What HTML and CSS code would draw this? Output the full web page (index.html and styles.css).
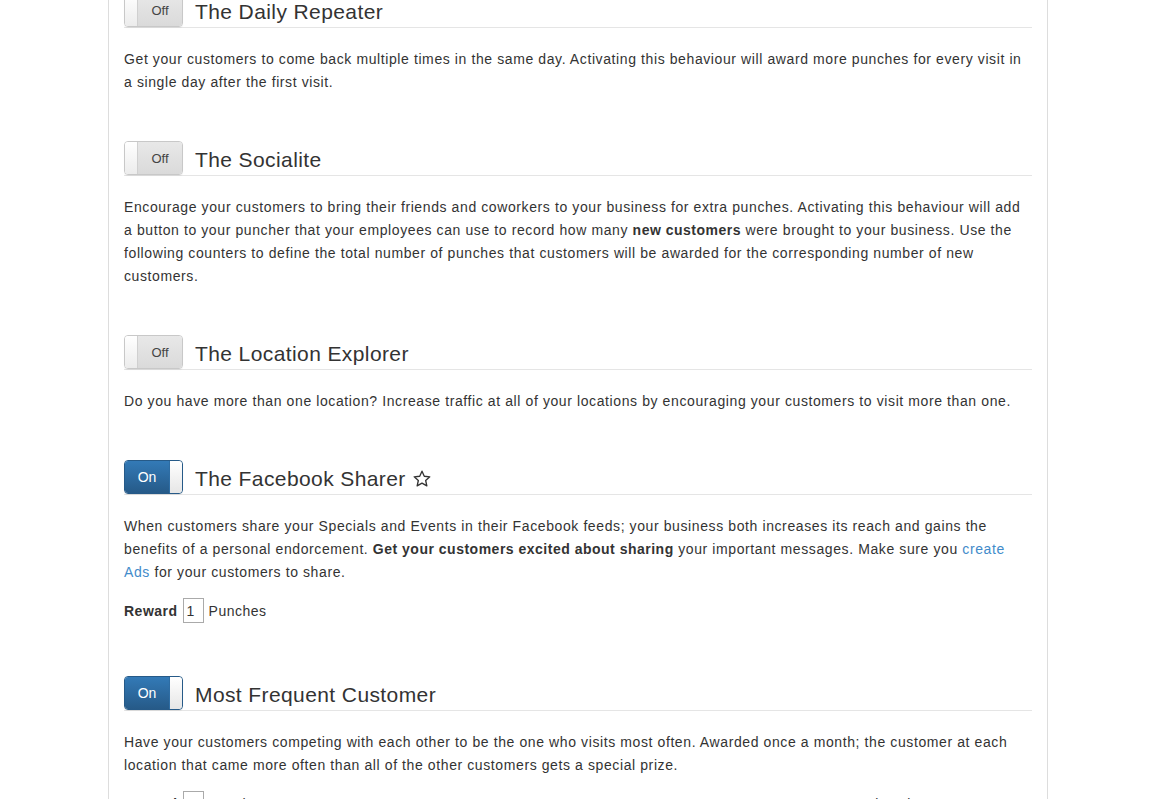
FILE: index.html
```html
<!DOCTYPE html>
<html>
<head>
<meta charset="utf-8">
<link rel="stylesheet" href="styles.css">
</head>
<body>
<div class="container">
  <div class="panel">
    <section class="behaviour first">
      <div class="bh-head">
        <span class="toggle off"><span class="handle"></span><span class="label">Off</span></span>
        <h4 class="bh-title">The Daily Repeater</h4>
      </div>
      <p class="bh-text">Get your customers to come back multiple times in the same day. Activating this behaviour will award more punches for every visit in a single day after the first visit.</p>
    </section>

    <section class="behaviour">
      <div class="bh-head">
        <span class="toggle off"><span class="handle"></span><span class="label">Off</span></span>
        <h4 class="bh-title">The Socialite</h4>
      </div>
      <p class="bh-text">Encourage your customers to bring their friends and coworkers to your business for extra punches. Activating this behaviour will add a button to your puncher that your employees can use to record how many <b>new customers</b> were brought to your business. Use the following counters to define the total number of punches that customers will be awarded for the corresponding number of new customers.</p>
    </section>

    <section class="behaviour">
      <div class="bh-head">
        <span class="toggle off"><span class="handle"></span><span class="label">Off</span></span>
        <h4 class="bh-title">The Location Explorer</h4>
      </div>
      <p class="bh-text">Do you have more than one location? Increase traffic at all of your locations by encouraging your customers to visit more than one.</p>
    </section>

    <section class="behaviour">
      <div class="bh-head">
        <span class="toggle on"><span class="label">On</span><span class="handle"></span></span>
        <h4 class="bh-title">The Facebook Sharer
          <svg class="star" viewBox="0 0 24 24" width="20" height="20"><path d="M12 2.6l2.75 6.1 6.6.65-4.95 4.45 1.42 6.5L12 16.95 6.18 20.3l1.42-6.5L2.65 9.35l6.6-.65z" fill="none" stroke="#333" stroke-width="1.6" stroke-linejoin="round"/></svg>
        </h4>
      </div>
      <p class="bh-text">When customers share your Specials and Events in their Facebook feeds; your business both increases its reach and gains the benefits of a personal endorcement. <b>Get your customers excited about sharing</b> your important messages. Make sure you <a href="#">create Ads</a> for your customers to share.</p>
      <div class="reward">
        <b class="reward-label">Reward</b>
        <input class="reward-input" type="text" value="1">
        <span class="reward-unit">Punches</span>
      </div>
    </section>

    <section class="behaviour">
      <div class="bh-head">
        <span class="toggle on"><span class="label">On</span><span class="handle"></span></span>
        <h4 class="bh-title">Most Frequent Customer</h4>
      </div>
      <p class="bh-text">Have your customers competing with each other to be the one who visits most often. Awarded once a month; the customer at each location that came more often than all of the other customers gets a special prize.</p>
      <div class="reward">
        <b class="reward-label">Reward</b>
        <input class="reward-input" type="text" value="">
        <span class="reward-unit">Punches</span>
        <span class="check-wrap"><span class="check"></span> Per location</span>
      </div>
    </section>
  </div>
</div>
</body>
</html>
```

FILE: styles.css
```css
html, body {
  margin: 0;
  padding: 0;
  background: #fff;
  overflow: hidden;
}
body {
  font-family: "Liberation Sans", Arial, Helvetica, sans-serif;
  font-size: 14px;
  color: #333;
}
.container {
  width: 970px;
  margin-left: calc(50% - 485.5px);
  padding: 0 15px;
  box-sizing: border-box;
}
.panel {
  border-left: 1px solid #ddd;
  border-right: 1px solid #ddd;
  padding: 0 15px;
  height: 900px;
}
.behaviour {
  margin-bottom: 47px;
}
.behaviour.first {
  margin-top: -7px;
}
.bh-head {
  display: flex;
  align-items: center;
  gap: 12px;
  height: 34px;
  border-bottom: 1px solid #e5e5e5;
}
.bh-title {
  margin: 4px 0 0;
  font-size: 21px;
  font-weight: normal;
  letter-spacing: 0.4px;
  color: #333;
  display: flex;
  align-items: center;
  gap: 6px;
}
.star {
  display: block;
  margin-top: -1px;
}
.toggle {
  display: flex;
  width: 59px;
  height: 34px;
  box-sizing: border-box;
  border: 1px solid #c8c8c8;
  border-radius: 4px;
  overflow: hidden;
  font-size: 13px;
  flex: none;
  align-self: flex-start;
  box-shadow: 0 1px 1px rgba(0,0,0,0.06);
}
.toggle .handle {
  width: 12px;
  flex: none;
  background: linear-gradient(#fff, #ececec);
}
.toggle .label {
  flex: 1;
  display: flex;
  align-items: center;
  justify-content: center;
}
.toggle.off .handle {
  border-right: 1px solid #d0d0d0;
}
.toggle.off .label {
  background: linear-gradient(#e8e8e8, #dadada);
  color: #444;
}
.toggle.on {
  border-color: #265a88;
}
.toggle.on .label {
  background: linear-gradient(#337ab7, #265a88);
  color: #fff;
  font-size: 14px;
}
.toggle.on .handle {
  border-left: 1px solid #2e6da4;
  border-radius: 0 3px 3px 0;
  background: linear-gradient(#fff, #e6e6e6);
}
.bh-text {
  margin: 20px 0 0;
  line-height: 23px;
  letter-spacing: 0.6px;
}
.bh-text b {
  letter-spacing: 0.5px;
}
.bh-text a {
  color: #428bca;
  text-decoration: none;
}
.reward {
  display: flex;
  align-items: center;
  margin-top: 14px;
  padding-bottom: 6px;
  height: 25px;
  letter-spacing: 0.5px;
}
.reward-label {
  margin-right: 5px;
}
.reward-input {
  width: 21px;
  height: 25px;
  box-sizing: border-box;
  border: 1px solid #aaa;
  padding: 0 3px;
  font: inherit;
  color: #333;
  margin: 0 5px 0 0;
  outline: none;
}
.check-wrap {
  margin-left: 563px;
  display: flex;
  align-items: center;
  gap: 5px;
}
.check {
  width: 11px;
  height: 11px;
  border: 1px solid #aaa;
  border-radius: 2px;
  margin-top: 6px;
}
```
